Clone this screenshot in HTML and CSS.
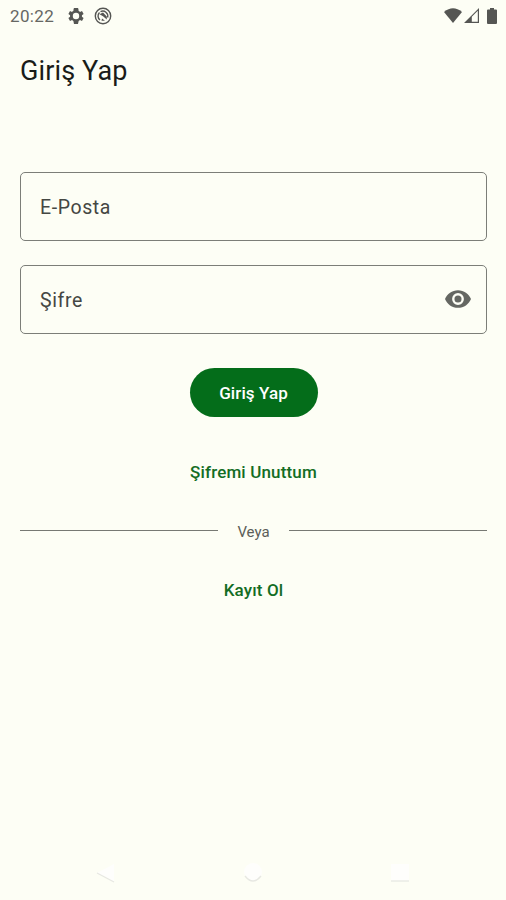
FILE: index.html
```html
<!DOCTYPE html>
<html lang="tr">
<head>
<meta charset="utf-8">
<title>Giriş Yap</title>
<link rel="stylesheet" href="styles.css">
</head>
<body>
<div class="screen">
  <header class="status">
    <span class="time">20:22</span>
    <svg class="gear" viewBox="2 2 20 20"><path fill-rule="evenodd" d="M19.4 13a7.5 7.5 0 0 0 0-2l2.1-1.6-2-3.5-2.5 1a8 8 0 0 0-1.7-1L15 3.200 14.500 2h-5L9 3.200 8.700 5.900a8 8 0 0 0-1.700 1l-2.500-1-2 3.500L4.600 11a7.500 7.500 0 0 0 0 2l-2.100 1.600 2 3.500 2.500-1a8 8 0 0 0 1.700 1L9.500 22h5l.8-3.900a8 8 0 0 0 1.700-1l2.500 1 2-3.500zM12 8a4 4 0 1 0 0 8 4 4 0 0 0 0-8z"/></svg>
    <svg class="badge" viewBox="0 0 18 18"><circle cx="9" cy="9" r="7.700"/><path d="M6 13A5 5 0 0 1 5.500 5.500M6.500 4.700A5 5 0 0 1 13.600 10.500"/><path class="solid" d="M5.500 7.300 9 5.500 12.800 9.500 12.800 12.600 9 9.300zM8 11.500l3 2.300H7.500z"/></svg>
    <span class="spacer"></span>
    <svg class="wifi" viewBox="0 0 18 15"><path d="M0 4Q9-3.500 18 4L9 15z"/></svg>
    <svg class="signal" viewBox="0 0 15 15"><path d="M0 15 15 0V15zM7.800 13.800h6V2.800l-6 6z" fill-rule="evenodd"/></svg>
    <svg class="battery" viewBox="0 0 10 16"><path d="M3 0h4v1.500h2q1 0 1 1V15q0 1-1 1H1q-1 0-1-1V2.500q0-1 1-1h2z"/></svg>
  </header>
  <h1>Giriş Yap</h1>
  <main>
    <div class="field"><span>E-Posta</span></div>
    <div class="field"><span>Şifre</span>
      <svg class="eye" viewBox="1 4.500 22 15"><path d="M12 4.500C7 4.500 2.730 7.610 1 12c1.730 4.390 6 7.500 11 7.500s9.270-3.110 11-7.500c-1.730-4.390-6-7.500-11-7.500zM12 17a5 5 0 1 1 0-10 5 5 0 0 1 0 10zm0-8a3 3 0 1 0 0 6 3 3 0 0 0 0-6z"/></svg>
    </div>
    <button class="primary">Giriş Yap</button>
    <a class="link forgot">Şifremi Unuttum</a>
    <div class="divider"><span>Veya</span></div>
    <a class="link">Kayıt Ol</a>
  </main>
  <nav>
    <svg viewBox="0 0 24 24"><path class="fill" d="M3 12 20 3v18z"/><path class="edge" d="m3 12 17 9"/></svg>
    <svg viewBox="0 0 24 24"><circle class="fill" cx="12" cy="11" r="9"/><path class="edge" d="M4 15Q12 25 20 15"/></svg>
    <svg viewBox="0 0 24 24"><path class="fill" d="M3 3h18v17H3z"/><path class="edge" d="M3 20h18"/></svg>
  </nav>
</div>
</body>
</html>
```
FILE: styles.css
```css
* { box-sizing: border-box; }
body { margin: 0; background: #fdfef5; color: #1a1c19; font-family: Roboto, sans-serif; }
.screen { height: 900px; display: flex; flex-direction: column; overflow: hidden; }
svg { flex: none; fill: #555653; }
.status { height: 31px; padding: 0 9px 0 10px; display: flex; align-items: center; }
.time { width: 58px; font-size: 17px; letter-spacing: .35px; color: #666763; }
.gear { width: 16px; height: 16px; }
.badge { width: 18px; height: 18px; margin-left: 10px; }
.badge circle, .badge path { fill: none; stroke: #555653; stroke-width: 1.4; }
.badge .solid { fill: #555653; stroke: none; }
.spacer { flex: 1; }
.wifi { width: 18px; height: 15px; }
.signal { width: 15px; height: 15px; margin-left: 2px; }
.battery { width: 10px; height: 16px; margin-left: 8px; }
h1 { margin: 23px 20px 0; height: 34px; font-size: 27px; letter-spacing: .12px; line-height: 34px; font-weight: 400; }
main { display: flex; flex-direction: column; align-items: center; padding: 84px 19px 0 20px; }
.field { width: 100%; height: 69px; margin-bottom: 24px; padding: 0 15px 0 19px; border: 1px solid #7c7e78; border-radius: 5px; display: flex; align-items: center; justify-content: space-between; font-size: 19.5px; letter-spacing: .6px; color: #454743; }
.field span { padding-top: 1px; }
.eye { width: 26px; height: 18px; margin-bottom: 1px; fill: #656762; }
.primary { width: 128px; height: 49px; margin-top: 10px; padding: 0; border: 0; border-radius: 25px; background: #046d1a; color: #fff; font: 500 17px Roboto, sans-serif; letter-spacing: .1px; }
.link { font-size: 17px; line-height: 20px; font-weight: 500; letter-spacing: .15px; color: #136d24; }
.forgot { margin-top: 45px; }
.divider { width: 100%; height: 20px; margin: 39px 0; display: flex; align-items: center; gap: 19px; font-size: 15px; color: #5c5e59; }
.divider span { padding-top: 2px; }
.divider::before, .divider::after { content: ""; flex: 1; height: 1px; margin-bottom: 2px; background: #777973; }
nav { margin-top: auto; height: 54px; padding: 0 94px; display: flex; justify-content: space-between; align-items: center; }
nav svg { width: 24px; height: 24px; }
nav .fill { fill: #fefefc; }
nav .edge { fill: none; stroke: #e7e8e2; stroke-width: 1.3; }
```
